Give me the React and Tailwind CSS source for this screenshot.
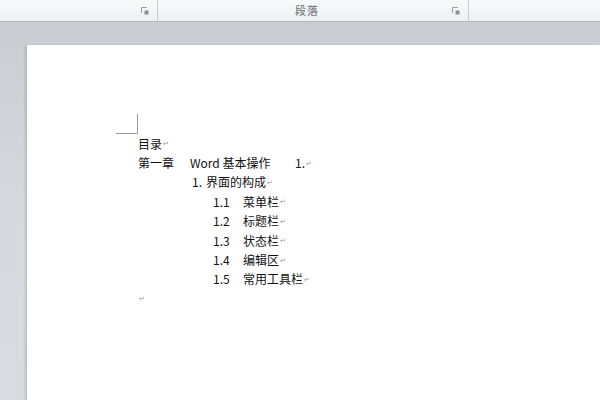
import React from "react";

const font = { fontFamily: '"Noto Sans CJK SC", "Noto Sans", sans-serif' };

function Mark() {
  return <span className="ml-[1px] text-[7px] text-[#9a9a9a] align-baseline">↵</span>;
}

function Launcher() {
  return (
    <svg width="8" height="8" viewBox="0 0 8 8" className="block">
      <path d="M0.5 6 V0.5 H6" fill="none" stroke="#9aa0a8" strokeWidth="1" />
      <rect x="3.5" y="3.5" width="4" height="4" fill="#8a9098" />
    </svg>
  );
}

function Row({ children }) {
  return <div className="h-[19.4px] flex items-center whitespace-nowrap">{children}</div>;
}

export default function App() {
  return (
    <div className="w-[600px] h-[400px] overflow-hidden flex flex-col bg-[#d3d6db] text-[#111]" style={font}>
      <div className="h-[22px] flex bg-gradient-to-b from-[#f8f9fa] to-[#eef0f3] border-b border-[#b4b8be] shrink-0">
        <div className="w-[158px] border-r border-[#c8ccd2] flex items-center justify-end pr-[8px]">
          <Launcher />
        </div>
        <div className="w-[311px] border-r border-[#c8ccd2] flex items-center relative">
          <div className="flex-1 text-center text-[11px] font-medium text-[#7c8188] tracking-[1px] pl-[4px]">段落</div>
          <div className="pr-[8px]">
            <Launcher />
          </div>
        </div>
        <div className="flex-1" />
      </div>
      <div className="flex-1 flex flex-col pt-[23px] pl-[27px] bg-gradient-to-b from-[#c9ccd1] via-[#d6d9dd] to-[#d8dbdf]">
        <div className="flex-1 bg-white shadow-[-2px_0_2px_rgba(0,0,0,0.12)] pt-[69px]">
          <div className="ml-[89px] w-[22px] h-[20px] border-r border-b border-[#9a9a9a]" />
          <div className="ml-[111px] text-[12px] leading-none">
            <Row>
              <span>目录</span>
              <Mark />
            </Row>
            <Row>
              <span className="w-[52px]">第一章</span>
              <span className="w-[105px]">Word 基本操作</span>
              <span>1.</span>
              <Mark />
            </Row>
            <Row>
              <span className="ml-[54px] w-[14px]">1.</span>
              <span>界面的构成</span>
              <Mark />
            </Row>
            {[
              ["1.1", "菜单栏"],
              ["1.2", "标题栏"],
              ["1.3", "状态栏"],
              ["1.4", "编辑区"],
              ["1.5", "常用工具栏"],
            ].map(([n, t]) => (
              <Row key={n}>
                <span className="ml-[75px] w-[30px]">{n}</span>
                <span>{t}</span>
                <Mark />
              </Row>
            ))}
            <Row>
              <Mark />
            </Row>
          </div>
        </div>
      </div>
    </div>
  );
}
